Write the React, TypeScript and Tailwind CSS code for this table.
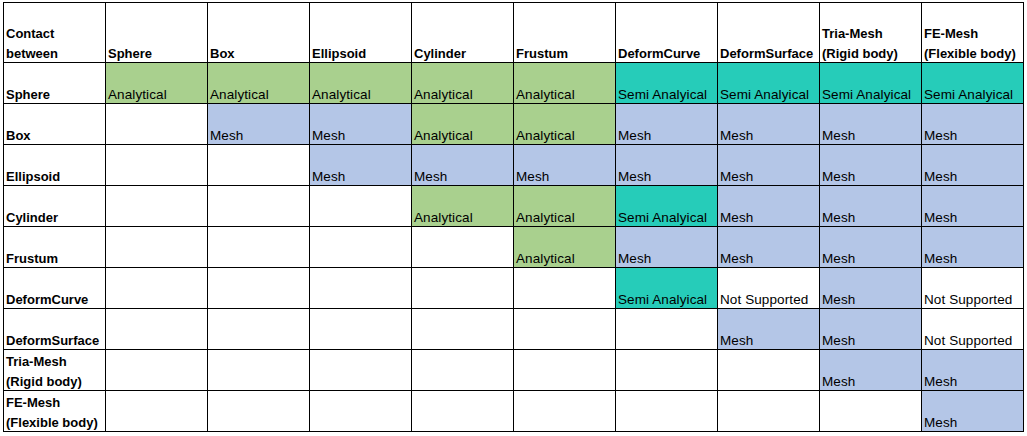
const headers = [
  ["Contact", "between"],
  ["Sphere"],
  ["Box"],
  ["Ellipsoid"],
  ["Cylinder"],
  ["Frustum"],
  ["DeformCurve"],
  ["DeformSurface"],
  ["Tria-Mesh", "(Rigid body)"],
  ["FE-Mesh", "(Flexible body)"],
];

// A = Analytical, S = Semi Analyical, M = Mesh, N = Not Supported, "" = empty
const rows: { label: string[]; cells: string[] }[] = [
  { label: ["Sphere"], cells: ["A", "A", "A", "A", "A", "S", "S", "S", "S"] },
  { label: ["Box"], cells: ["", "M", "M", "A", "A", "M", "M", "M", "M"] },
  { label: ["Ellipsoid"], cells: ["", "", "M", "M", "M", "M", "M", "M", "M"] },
  { label: ["Cylinder"], cells: ["", "", "", "A", "A", "S", "M", "M", "M"] },
  { label: ["Frustum"], cells: ["", "", "", "", "A", "M", "M", "M", "M"] },
  { label: ["DeformCurve"], cells: ["", "", "", "", "", "S", "N", "M", "N"] },
  { label: ["DeformSurface"], cells: ["", "", "", "", "", "", "M", "M", "N"] },
  { label: ["Tria-Mesh", "(Rigid body)"], cells: ["", "", "", "", "", "", "", "M", "M"] },
  { label: ["FE-Mesh", "(Flexible body)"], cells: ["", "", "", "", "", "", "", "", "M"] },
];

const kinds: Record<string, { text: string; bg: string }> = {
  A: { text: "Analytical", bg: "bg-[#a9d08e]" },
  S: { text: "Semi Analyical", bg: "bg-[#26ccb9]" },
  M: { text: "Mesh", bg: "bg-[#b4c6e7]" },
  N: { text: "Not Supported", bg: "bg-white" },
  "": { text: "", bg: "bg-white" },
};

function Cell({ lines, bg = "bg-white", bold = false }: { lines: string[]; bg?: string; bold?: boolean }) {
  return (
    <div
      className={`${bg} flex flex-col justify-end pl-[2px] overflow-hidden whitespace-nowrap ${
        bold ? "font-bold text-[13px]" : "text-[13.5px] tracking-[0.1px]"
      }`}
    >
      {lines.map((l, i) => (
        <span key={i} className="translate-y-[2px]">
          {l}
        </span>
      ))}
    </div>
  );
}

export default function App() {
  return (
    <div className="w-[1027px] h-[436px] bg-white overflow-hidden pt-[2px] pl-[3px]">
      <div
        className="grid w-fit bg-black p-px leading-[20px] text-black"
        style={{ fontFamily: '"Liberation Sans", Arial, sans-serif' }}
      >
        <div className="grid grid-cols-[repeat(10,101px)] grid-rows-[59px_repeat(9,40px)] gap-px">
          {headers.map((h, i) => (
            <Cell key={i} lines={h} bold />
          ))}
          {rows.map((r, ri) => (
            <>
              <Cell key={`l${ri}`} lines={r.label} bold />
              {r.cells.map((c, ci) => (
                <Cell key={`${ri}-${ci}`} lines={[kinds[c].text]} bg={kinds[c].bg} />
              ))}
            </>
          ))}
        </div>
      </div>
    </div>
  );
}
